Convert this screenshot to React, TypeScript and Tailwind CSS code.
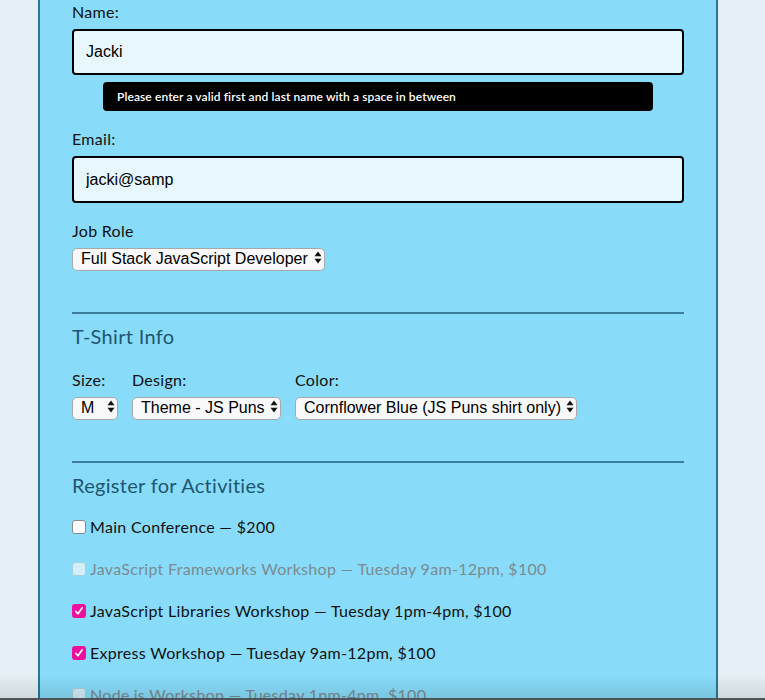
import React from 'react';

const labelFont = { fontFamily: 'Lato, "Open Sans", sans-serif' };

const SelectBox: React.FC<{ value: string; width: string }> = ({ value, width }) => (
  <div className={`relative ${width} h-[23px]`}>
    <select
      defaultValue={value}
      className="w-full h-full appearance-none bg-[#f9f9f9] border border-[#a8a8a8] rounded-[5px] pl-[8px] pr-[14px] text-[16px] leading-[20px] text-black font-['Liberation_Sans',Arial,sans-serif]"
    >
      <option>{value}</option>
    </select>
    <svg className="absolute right-[3px] top-[5px] pointer-events-none" width="8" height="13" viewBox="0 0 8 13">
      <path d="M4 0.5 L7.5 5.2 L0.5 5.2 Z" fill="#111" />
      <path d="M4 12.5 L7.5 7.8 L0.5 7.8 Z" fill="#111" />
    </svg>
  </div>
);

type Activity = { text: string; state: 'off' | 'disabled' | 'on' };

const activities: Activity[] = [
  { text: 'Main Conference — $200', state: 'off' },
  { text: 'JavaScript Frameworks Workshop — Tuesday 9am-12pm, $100', state: 'disabled' },
  { text: 'JavaScript Libraries Workshop — Tuesday 1pm-4pm, $100', state: 'on' },
  { text: 'Express Workshop — Tuesday 9am-12pm, $100', state: 'on' },
  { text: 'Node.js Workshop — Tuesday 1pm-4pm, $100', state: 'disabled' },
];

const Check: React.FC<{ state: Activity['state'] }> = ({ state }) => {
  if (state === 'on') {
    return (
      <span className="w-[14px] h-[14px] rounded-[3px] bg-[#f00f9c] flex items-center justify-center shrink-0">
        <svg width="10" height="10" viewBox="0 0 10 10">
          <path d="M1.8 5.4 L4 7.8 L8.2 1.8" stroke="#fff" strokeWidth="1.6" fill="none" strokeLinecap="round" strokeLinejoin="round" />
        </svg>
      </span>
    );
  }
  return (
    <span
      className={`w-[14px] h-[14px] rounded-[3px] border shrink-0 ${
        state === 'off' ? 'bg-white border-[#8a8a8a]' : 'bg-[#d2eef9] border-[#a9cfdc]'
      }`}
    />
  );
};

export default function App() {
  return (
    <div className="min-h-[700px] h-[700px] overflow-hidden bg-[#e5f0f6] relative">
      <div className="ml-[38px] w-[680px] h-full bg-[#88dcf9] border-x-2 border-[#2a7693] px-[32px] tracking-[0.3px]" style={labelFont}>
        <label className="block text-[16px] leading-[24px] text-[#111]">Name:</label>
        <input
          defaultValue="Jacki"
          className="mt-[5px] block w-full h-[46px] border-2 border-black rounded-[4px] bg-[#e7f7fd] px-[12px] text-[16px] tracking-normal text-black font-['Liberation_Sans',Arial,sans-serif]"
        />
        <div className="ml-[31px] mt-[7px] w-[550px] h-[29px] bg-black rounded-[4px] flex items-center pl-[14px] text-white text-[12px] tracking-[0.1px] font-semibold">
          Please enter a valid first and last name with a space in between
        </div>

        <label className="block mt-[16px] text-[16px] leading-[24px] text-[#111]">Email:</label>
        <input
          defaultValue="jacki@samp"
          className="mt-[5px] block w-full h-[47px] border-2 border-black rounded-[4px] bg-[#e7f7fd] px-[12px] text-[16px] tracking-normal text-black font-['Liberation_Sans',Arial,sans-serif]"
        />

        <label className="block mt-[16px] text-[16px] leading-[24px] text-[#111]">Job Role</label>
        <div className="mt-[3px] tracking-normal">
          <SelectBox value="Full Stack JavaScript Developer" width="w-[253px]" />
        </div>

        <hr className="mt-[43px] border-0 h-[2px] bg-[#3a7e9b]" />
        <h2 className="mt-[10px] text-[20px] leading-[24px] text-[#1d5672]">T-Shirt Info</h2>

        <div className="mt-[20px] flex gap-[14px]">
          <div>
            <div className="text-[16px] leading-[24px] text-[#111]">Size:</div>
            <div className="mt-[3px] tracking-normal">
              <SelectBox value="M" width="w-[46px]" />
            </div>
          </div>
          <div>
            <div className="text-[16px] leading-[24px] text-[#111]">Design:</div>
            <div className="mt-[3px] tracking-normal">
              <SelectBox value="Theme - JS Puns" width="w-[149px]" />
            </div>
          </div>
          <div>
            <div className="text-[16px] leading-[24px] text-[#111]">Color:</div>
            <div className="mt-[3px] tracking-normal">
              <SelectBox value="Cornflower Blue (JS Puns shirt only)" width="w-[282px]" />
            </div>
          </div>
        </div>

        <hr className="mt-[43px] border-0 h-[2px] bg-[#3a7e9b]" />
        <h2 className="mt-[10px] text-[20px] leading-[24px] text-[#1d5672]">Register for Activities</h2>

        <div className="mt-[18px] flex flex-col gap-[18px]">
          {activities.map((a, i) => (
            <label key={i} className="flex items-center gap-[4px] h-[24px]">
              <Check state={a.state} />
              <span className={`text-[16px] leading-[24px] ${a.state === 'disabled' ? 'text-[#7a8b92]' : 'text-[#111]'}`}>
                {a.text}
              </span>
            </label>
          ))}
        </div>
      </div>

      <div className="absolute left-0 right-0 bottom-[2px] h-[24px] bg-gradient-to-b from-transparent to-black/10 pointer-events-none" />
      <div className="absolute left-0 right-0 bottom-0 h-[2px] bg-[#4d5356]" />
    </div>
  );
}
